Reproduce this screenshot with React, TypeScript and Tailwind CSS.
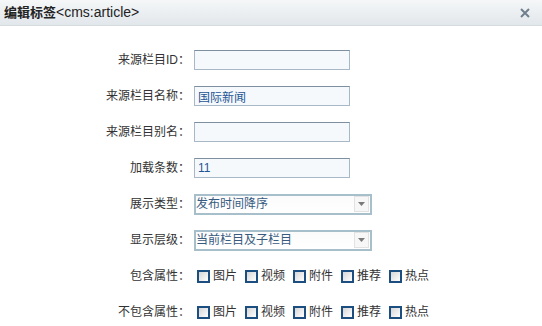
import React from "react";

const font = { fontFamily: '"Liberation Sans", "Noto Sans CJK SC", sans-serif' };

function Row({ label, children }: { label: string; children: React.ReactNode }) {
  return (
    <div className="flex h-[36px] items-center">
      <div className="w-[190px] text-right text-[12px] text-[#333]">{label}</div>
      <div className="ml-[4px] flex items-center">{children}</div>
    </div>
  );
}

function TextBox({ value, w = "w-[156px]" }: { value?: string; w?: string }) {
  return (
    <input
      readOnly
      value={value ?? ""}
      className={`${w} h-[20px] border border-[#a9b8c6] border-t-[#7d8fa1] bg-[#f5f9fc] px-[3px] text-[12px] text-[#1f5594] outline-none`}
      style={font}
    />
  );
}

function Select({ value }: { value: string }) {
  return (
    <div className="flex h-[21px] w-[178px] items-center justify-between border-2 border-[#a6bfcb] bg-gradient-to-b from-[#fbfbfb] to-white">
      <span className="text-[12px] text-[#375a7f]">{value}</span>
      <span className="mr-[1px] flex h-[16px] w-[15px] items-center justify-center border border-[#e2e2e2] bg-[#f7f7f7]">
        <svg width="7" height="4" viewBox="0 0 7 4">
          <path d="M0 0H7L3.5 4Z" fill="#7a7a7a" />
        </svg>
      </span>
    </div>
  );
}

function Checks() {
  const items = ["图片", "视频", "附件", "推荐", "热点"];
  return (
    <div className="flex items-center">
      {items.map((t) => (
        <label key={t} className="ml-[3px] mr-[5px] flex items-center text-[12px] text-[#333]">
          <span className="h-[13px] w-[13px] border-2 border-[#1c4f80] bg-gradient-to-br from-[#d6d6d6] to-white" />
          <span className="ml-[3px]">{t}</span>
        </label>
      ))}
    </div>
  );
}

export default function App() {
  return (
    <div className="h-[326px] w-[542px] overflow-hidden bg-white" style={font}>
      <div className="flex h-[26px] items-center justify-between border-b border-[#d5dbe0] bg-gradient-to-b from-[#f5f7f8] to-[#e2e7eb] pl-[4px] pr-[12px]">
        <div className="text-[13px] text-[#222]">
          <span className="font-bold">编辑标签</span>
          <span className="text-[14px]">&lt;cms:article&gt;</span>
        </div>
        <svg width="10" height="10" viewBox="0 0 10 10">
          <path d="M1 1L9 9M9 1L1 9" stroke="#6f7f8e" strokeWidth="2" />
        </svg>
      </div>
      <div className="pt-[16px]">
        <Row label="来源栏目ID：">
          <TextBox />
        </Row>
        <Row label="来源栏目名称：">
          <TextBox value="国际新闻" />
        </Row>
        <Row label="来源栏目别名：">
          <TextBox />
        </Row>
        <Row label="加载条数：">
          <TextBox value="11" />
        </Row>
        <Row label="展示类型：">
          <Select value="发布时间降序" />
        </Row>
        <Row label="显示层级：">
          <Select value="当前栏目及子栏目" />
        </Row>
        <Row label="包含属性：">
          <Checks />
        </Row>
        <Row label="不包含属性：">
          <Checks />
        </Row>
      </div>
    </div>
  );
}
